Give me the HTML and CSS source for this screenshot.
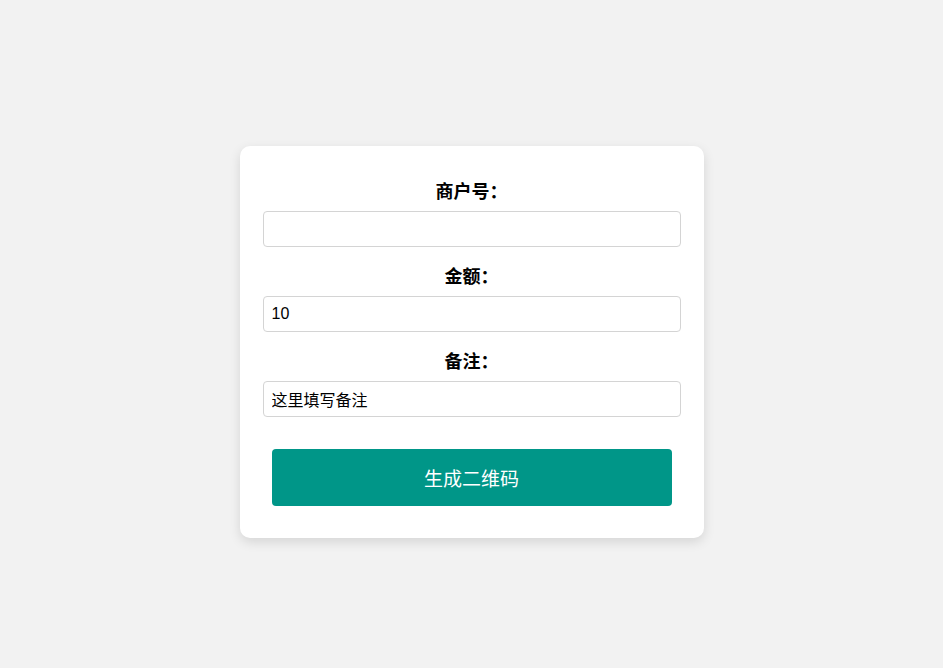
FILE: index.html
```html
<!DOCTYPE html>
<html lang="zh-CN">
<head>
  <meta charset="UTF-8">
  <title>生成二维码</title>
  <meta name="viewport" content="width=device-width, initial-scale=1.0">
  <link rel="stylesheet" href="styles.css">
</head>
<body>
  <div class="card">
    <div class="field">
      <label for="mch">商户号：</label>
      <input type="text" id="mch">
    </div>
    <div class="field">
      <label for="amount">金额：</label>
      <input type="text" id="amount" value="10">
    </div>
    <div class="field">
      <label for="remark">备注：</label>
      <input type="text" id="remark" value="这里填写备注">
    </div>
    <button class="gen-btn">生成二维码</button>
  </div>
</body>
</html>
```

FILE: styles.css
```css
html, body {
  margin: 0;
  height: 100%;
}
body {
  background-color: #f2f2f2;
  font-family: "Liberation Sans", Arial, "Noto Sans CJK SC", sans-serif;
  display: flex;
  align-items: center;
  justify-content: center;
}
.card {
  box-sizing: border-box;
  width: 464px;
  margin-top: 16px;
  background: #fff;
  border-radius: 10px;
  box-shadow: 0 4px 12px rgba(0, 0, 0, 0.12);
  padding: 34px 23px 32px;
  display: flex;
  flex-direction: column;
  align-items: center;
}
.field {
  width: 100%;
  margin-bottom: 18px;
}
.field:last-of-type {
  margin-bottom: 0;
}
label {
  display: block;
  text-align: center;
  font-size: 18px;
  font-weight: bold;
  line-height: 24px;
  margin-bottom: 7px;
  color: #000;
}
input {
  box-sizing: border-box;
  width: 100%;
  height: 36px;
  padding: 0 8px;
  font-size: 16px;
  font-family: "Liberation Sans", Arial, "Noto Sans CJK SC", sans-serif;
  border: 1px solid #d4d4d4;
  border-radius: 4px;
  color: #000;
}
.gen-btn {
  margin-top: 32px;
  width: 400px;
  height: 57px;
  background-color: #009688;
  color: #fff;
  font-size: 19px;
  font-family: "Noto Sans CJK SC", sans-serif;
  border: none;
  border-radius: 4px;
  cursor: pointer;
}
```
